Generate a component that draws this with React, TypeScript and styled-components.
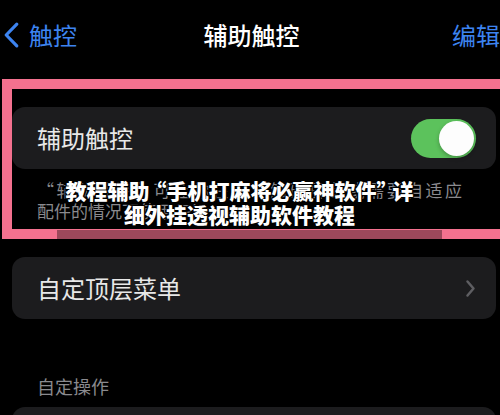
import React from 'react';
import styled, { createGlobalStyle } from 'styled-components';

const GlobalStyle = createGlobalStyle`
  html, body {
    margin: 0;
    padding: 0;
    background: #000;
    overflow: hidden;
  }
  body {
    font-family: "Noto Sans CJK SC", "Noto Sans", sans-serif;
    color: #fff;
  }
`;

const Screen = styled.div`
  position: relative;
  width: 500px;
  height: 415px;
  overflow: hidden;
  background: #000;
`;

const NavBar = styled.div`
  display: grid;
  grid-template-columns: 1fr auto 1fr;
  align-items: center;
  width: 510px;
  height: 70px;
  padding: 0 10px 0 3px;
  box-sizing: border-box;
`;

const NavBack = styled.div`
  display: flex;
  align-items: center;
  gap: 9px;
  color: #3d84f0;
  font-size: 24px;
  line-height: 1;
`;

const NavTitle = styled.div`
  font-size: 24px;
  font-weight: 500;
  color: #fff;
  line-height: 1;
`;

const NavAction = styled.div`
  justify-self: end;
  font-size: 24px;
  color: #3d84f0;
  line-height: 1;
`;

const List = styled.div`
  display: flex;
  flex-direction: column;
  padding: 37px 4px 0 12px;
`;

const Card = styled.div<{ $mt?: number }>`
  display: flex;
  align-items: center;
  justify-content: space-between;
  height: 62px;
  margin-top: ${(p) => p.$mt ?? 0}px;
  padding: 0 20px 0 25px;
  background: #1c1c1e;
  border-radius: 13px;
`;

const RowLabel = styled.span`
  font-size: 24px;
  color: #e8e8e8;
  line-height: 1;
`;

const Toggle = styled.div<{ $on: boolean }>`
  position: relative;
  width: 65px;
  height: 39px;
  border-radius: 20px;
  background: ${(p) => (p.$on ? '#5cc25c' : '#39393d')};
`;

const Knob = styled.div<{ $on: boolean }>`
  position: absolute;
  top: 2px;
  left: ${(p) => (p.$on ? '28px' : '2px')};
  width: 35px;
  height: 35px;
  border-radius: 50%;
  background: #fdfdfd;
  box-shadow: 0 2px 4px rgba(0, 0, 0, 0.25);
`;

const Footer = styled.div`
  margin-top: 10px;
  padding-left: 25px;
  width: 425px;
  font-size: 17px;
  line-height: 21px;
  color: #8a8a8e;
`;

const FooterLine = styled.div<{ $justify?: boolean }>`
  white-space: nowrap;
  text-align: ${(p) => (p.$justify ? 'justify' : 'left')};
  text-align-last: ${(p) => (p.$justify ? 'justify' : 'left')};
`;

const SectionHeader = styled.div`
  margin-top: 55px;
  padding-left: 25px;
  font-size: 18px;
  line-height: 24px;
  color: #8a8a8e;
`;

const Frame = styled.div`
  position: absolute;
  top: 79px;
  left: 2px;
  width: 520px;
  height: 160px;
  box-sizing: border-box;
  border: 10px solid #f4718f;
  pointer-events: none;
`;

const Caption = styled.div`
  position: absolute;
  top: 178px;
  left: 57px;
  width: 385px;
  height: 61px;
  display: flex;
  flex-direction: column;
  pointer-events: none;
`;

const CaptionText = styled.div`
  display: flex;
  flex-direction: column;
  align-items: center;
  padding-right: 20px;
`;

const CaptionLine = styled.div`
  font-size: 21px;
  font-weight: 900;
  line-height: 24px;
  color: #fff;
  white-space: nowrap;
  text-shadow: 0 0 2px #000, 1px 1px 1px #000, -1px -1px 1px #000, 1px -1px 1px #000, -1px 1px 1px #000;
`;

const Quote = styled.span<{ $open?: boolean }>`
  margin-left: ${(p) => (p.$open ? '-4px' : '0')};
  letter-spacing: ${(p) => (p.$open ? '0' : '-5px')};
`;

const CaptionBand = styled.div`
  margin-top: auto;
  height: 9px;
  background: rgba(0, 0, 0, 0.36);
`;

const Chevron = ({ color, w, h, dir, sw }: { color: string; w: number; h: number; dir: 'left' | 'right'; sw: number }) => (
  <svg width={w} height={h} viewBox={`0 0 ${w} ${h}`} fill="none">
    {dir === 'left' ? (
      <path d={`M${w - sw} ${sw} L${sw} ${h / 2} L${w - sw} ${h - sw}`} stroke={color} strokeWidth={sw} strokeLinecap="round" strokeLinejoin="round" />
    ) : (
      <path d={`M${sw} ${sw} L${w - sw} ${h / 2} L${sw} ${h - sw}`} stroke={color} strokeWidth={sw} strokeLinecap="round" strokeLinejoin="round" />
    )}
  </svg>
);

export default function App() {
  return (
    <Screen>
      <GlobalStyle />
      <NavBar>
        <NavBack>
          <Chevron color="#3d84f0" w={17} h={28} dir="left" sw={3.2} />
          <span>触控</span>
        </NavBack>
        <NavTitle>辅助触控</NavTitle>
        <NavAction>编辑</NavAction>
      </NavBar>

      <List>
        <Card>
          <RowLabel>辅助触控</RowLabel>
          <Toggle $on>
            <Knob $on />
          </Toggle>
        </Card>
        <Footer>
          <FooterLine $justify>“辅助触控”可让你在难以触碰屏幕或需要自适应</FooterLine>
          <FooterLine>配件的情况下使用 iPhone。</FooterLine>
        </Footer>

        <Card $mt={36}>
          <RowLabel>自定顶层菜单</RowLabel>
          <Chevron color="#5e5e62" w={11} h={19} dir="right" sw={2.5} />
        </Card>

        <SectionHeader>自定操作</SectionHeader>
        <Card $mt={9} />
      </List>

      <Frame />
      <Caption>
        <CaptionText>
          <CaptionLine>
            教程辅助<Quote $open>“</Quote>手机打麻将必赢神软件<Quote>”</Quote>详
          </CaptionLine>
          <CaptionLine>细外挂透视辅助软件教程</CaptionLine>
        </CaptionText>
        <CaptionBand />
      </Caption>
    </Screen>
  );
}
